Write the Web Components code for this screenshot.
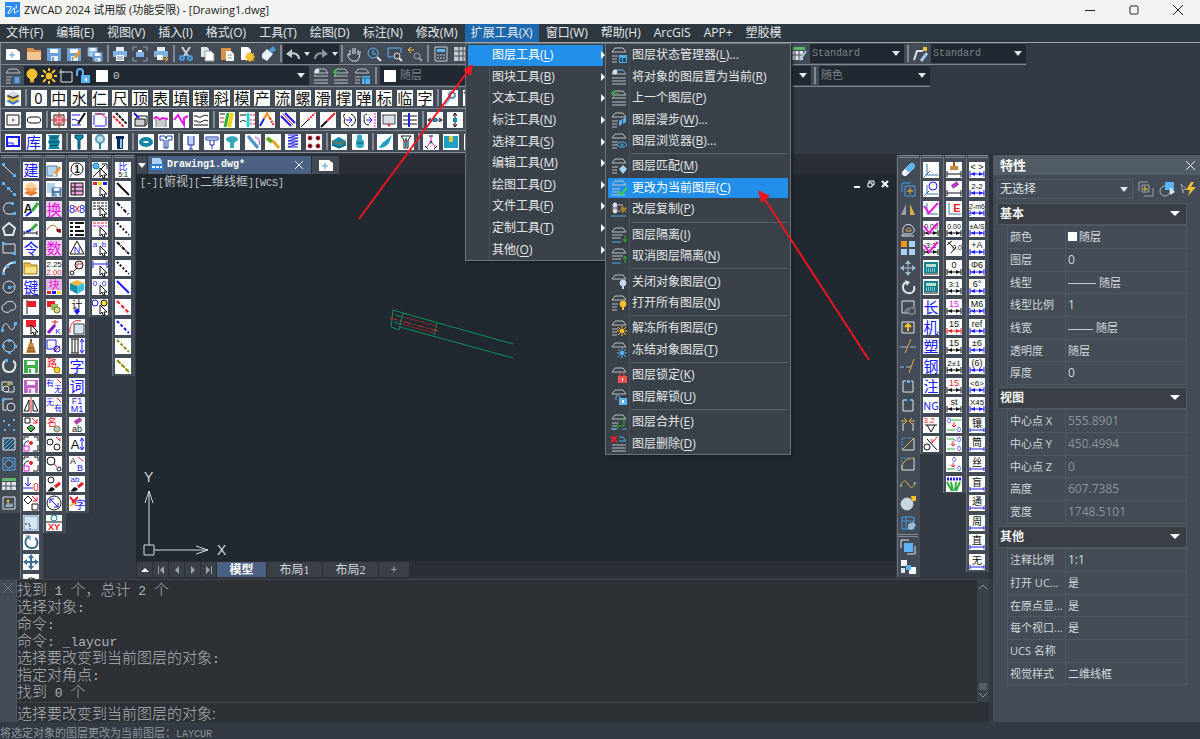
<!DOCTYPE html>
<html lang="zh-CN">
<head>
<meta charset="utf-8">
<title>ZWCAD 2024</title>
<style>
  html, body { height: 100%; margin: 0; }
  body {
    background: #333a44;
    overflow: hidden;
    font: 12px/16px "Open Sans", "Noto Sans CJK SC", sans-serif;
    color: #dfe3e6;
  }
</style>
</head>
<body>
<zw-app></zw-app>

<script>
// ---------- drawing helpers, all icons share a 16x16 box ----------
const line = (color, d, w = 1, extra = "") => `<path d="${d}" fill="none" stroke="${color}" stroke-width="${w}" ${extra}/>`;
const fill = (color, d) => `<path d="${d}" fill="${color}"/>`;
const circ = (x, y, r, stroke, inside = "none", w = 1) => `<circle cx="${x}" cy="${y}" r="${r}" stroke="${stroke}" fill="${inside}" stroke-width="${w}"/>`;
const text = (str, x, y, size, color, weight = 400) => `<text x="${x}" y="${y}" font-size="${size}" fill="${color}" font-weight="${weight}" text-anchor="middle">${str}</text>`;

const W = "#dfe4e8", B = "#5ab4f5", Y = "#f5c12e", K = "#111", U = "#1a1aff", R = "#e8202a", M = "#e815e0", T = "#0f87a5", G = "#2fae3c";

const cursor = fill("#fff", "M8 6v9l2-2 1 3h2l-1-3h3z") + line(K, "M8 6v9l2-2 1 3h2l-1-3h3z", 1);
const brush = line(R, "M14 7l-5 4", 3) + fill(K, "M1 15c2 0 2-3 5-4l3 2c-2 3-5 3-8 2z");
const redArrow = line(R, "M9 1l5 5M14 2v4h-4");
const pencil = line("#e8962e", "M14 5l-5 7", 3) + fill("#fff2cc", "M7 15l1-4 3 2z");
const dots = line(K, "M1 4V1h5M11 1h4v4M1 10c0-4 3-5 5-5M15 9v6h-5") + line(M, "M1 15v-5h5v5z") + circ(8, 7, 1.5, R, R);
const disk = (color) => fill(color, "M1 2h14v13H1z") + fill("#fff", "M4 3h8v4H4z") + fill("#e8eef4", "M5 10h7v5H5z") + fill(color, "M6 11h2v4H6z");
const check = line(M, "M1 5l5 7 9-10", 2);
const dim = (str, color = K, bar = U, size = 9) => text(str, 8, 8, size, color) + line(bar, "M1 9v6M15 9v6M1 12h14") + fill(bar, "M2 12l4-2v4zM14 12l-4-2v4z");
const dashLine = (color, gap) => line(color, "M2 2l12 12", 2, gap ? `stroke-dasharray="${gap}"` : "");
const screw = (a) => fill(T, a) + line("#064a66", a);

const layerTop = line("#b9c0c6", "M4 1h8l3 4H1z");
const layers = layerTop + line("#b9c0c6", "M1 9h6M1 12h5M1 15h5");
const layerFull = layerTop + line("#b9c0c6", "M1 8l2-1M15 8H1M1 12h14M1 15h14");
const bulb = (color) => circ(12, 9, 3, color, color) + fill(color, "M11 12h2v3h-2z");
const sun = (color) => circ(11, 11, 2, color, color) + line(color, "M11 6v2M11 14v2M6 11h2M14 11h2M7 7l2 2M15 7l-2 2M7 15l2-2M15 15l-2-2");

// icons drawn straight on the toolbar
const ICONS = {
  new: fill("#fff", "M1 3h10l4 3v8H1z") + line("#4a9de0", "M7 6v6M4 9h6"),
  open: fill("#d9924a", "M1 2h6l2 2h6v10H1z") + fill("#f6c58d", "M1 6h14v8H1z"),
  save: disk("#6b9fd6"),
  saveas: disk("#6b9fd6") + pencil,
  saveall: `<g transform="scale(.7)">${disk("#8fbdf0")}</g><g transform="translate(5 5) scale(.7)">${disk("#6b9fd6")}</g>`,
  print: fill("#e6ecf2", "M4 1h8v4H4z") + fill("#7fb2e6", "M1 5h14v6H1z") + fill("#fff", "M4 9h8v6H4z") + line("#6b7f95", "M5 11h6M5 13h6"),
  preview: line("#8aa2b8", "M1 5V1h4M11 1h4v4M1 11v4h4M11 15h4v-4") + fill("#7fb2e6", "M4 6h8v5H4z") + fill("#fff", "M6 4h4v2H6z"),
  publish: fill("#e6ecf2", "M4 1h8v4H4z") + fill("#7fb2e6", "M1 5h14v6H1z") + fill("#fff", "M4 9h6v5H4z") + line(Y, "M9 13h6M12 10l3 3-3 3"),
  cut: line("#cbd3da", "M4 1l6 9M12 1L6 10", 2) + circ(4, 12, 2, "#4a9de0", "none", 2) + circ(12, 12, 2, "#4a9de0", "none", 2),
  copy: fill("#dfe6ee", "M2 1h6l2 2v8H2z") + fill("#fff", "M6 5h6l3 3v7H6z") + line("#8a96a3", "M6 5h6l3 3v7H6z"),
  paste: fill("#d9924a", "M2 2h10v12H2z") + fill("#fff", "M7 5h5l3 3v7H7z") + line("#8a96a3", "M9 9h4M9 12h4"),
  pastespec: fill("#fff", "M2 1h7l3 3v10H2z") + circ(11, 11, 3, Y, "none", 2) + sun(Y),
  match: fill("#e6f0fa", "M2 8l5-5 6 5-6 7-5-3z") + fill("#4a9de0", "M9 4l4-4 3 4-4 3z"),
  undo: line("#c5cbd1", "M14 13c0-5-5-7-10-5", 2) + fill("#c5cbd1", "M1 8l6-5v9z"),
  redo: line("#8d959d", "M2 13c0-5 5-7 10-5", 2) + fill("#8d959d", "M15 8L9 3v9z"),
  pan: line(W, "M4 9V4M7 8V2M9 8V2M12 9V4M4 9L2 8c-1 2 2 6 4 7h5c2-2 3-5 3-10"),
  zoomrt: circ(7, 7, 5, B) + line(B, "M7 4v4h3") + line(W, "M11 11l4 4", 2),
  zoomwin: line(B, "M14 7V2H1v9h5") + circ(10, 10, 3, W) + line(W, "M12 12l3 3", 2),
  zoomprev: line(Y, "M1 4h6M4 1L1 4l3 3") + circ(10, 10, 3, "#9aa3ab") + line("#9aa3ab", "M12 12l3 3", 2),
  calc: line("#c5cbd1", "M2 1h12v14H2z") + fill("#5ab4f5", "M4 3h8v3H4z") + line("#c5cbd1", "M4 9h8M4 12h8", 1, 'stroke-dasharray="2 1"'),
  sheet: fill("#c5cbd1", "M1 1h14v14H1z") + line("#434c56", "M6 1v14M10 1v14M1 5h14M1 10h14"),
  layerprops: layers + fill("#3c6d9c", "M8 8h8v8H8z") + line("#a9d2f7", "M10 10h4M10 12h4M10 14h4"),
  bulb: circ(8, 6, 5, Y, Y) + fill(Y, "M6 10h4v4H6z") + line("#c98f12", "M6 14h4"),
  sun: circ(8, 8, 3, Y, Y) + line(Y, "M8 0v3M8 13v3M0 8h3M13 8h3M2 2l3 3M14 2l-3 3M2 14l3-3M14 14l-3-3", 2),
  freeze: line(W, "M5 4h9v10H3V7") + line(W, "M1 4h5M3 1v6"),
  unlock: line(B, "M2 8V4c0-4 6-4 6 0v3", 2) + fill(B, "M6 7h9v8H6z") + fill("#fff", "M10 10h2v3h-2z"),
  laycur: layerFull + circ(4, 3, 2, W, W),
  layprev: layerFull + line(G, "M0 4h7M3 1L0 4l3 3"),
  laystate: layers + fill(B, "M8 8h8v8H8z") + line("#1f5c8c", "M8 10h8M11 10v6"),
  tablestyle: fill("#62b36b", "M0 1h14v3H0z") + fill(W, "M0 5h12v9H0z") + line("#434c56", "M4 5v9M8 5v9M0 9h12") + line("#a8c8ea", "M15 5l-6 9", 2),
  leader: line(W, "M2 14L5 5h6", 2) + fill(Y, "M11 1h4v4h-4z") + line("#a8c8ea", "M15 7l-6 8", 3),
  line: line(W, "M2 3l12 11") + fill(B, "M1 1h3v3H1zM12 12h3v3h-3z"),
  xline: line(W, "M2 2l12 12", 1, 'stroke-dasharray="3 2"') + fill(B, "M1 1h3v3H1zM12 12h3v3h-3zM6 6h3v3H6z"),
  pline: line(W, "M12 2H7c-6 0-6 11 0 11h6") + fill(B, "M10 1h3v3h-3zM12 11h3v3h-3z"),
  polygon: line(W, "M8 2l6 5-2 7H4L2 7z", 2),
  rect: line(W, "M2 4h12v9H2z") + fill(B, "M1 2h3v3H1zM12 12h3v3h-3z"),
  arc: line(W, "M2 14C3 7 7 3 14 2", 2) + fill(B, "M1 12h3v3H1zM12 1h3v3h-3zM5 5h3v3H5z"),
  circle: circ(8, 8, 6, W) + line(B, "M8 8h6") + fill(B, "M7 7h3v3H7z"),
  cloud: line(W, "M4 13C0 12 0 6 4 5c2-4 9-3 10 0 2 3 0 7-4 6-1 2-3 3-6 2z", 1),
  spline: line(W, "M1 11C3 2 6 4 8 8s5 4 6-3") + fill(B, "M0 10h3v3H0zM13 3h3v3h-3z"),
  ellipse: circ(8, 8, 6, W) + fill(B, "M7 1h3v3H7zM1 7h3v3H1zM13 7h3v3h-3zM7 13h3v3H7z"),
  earc: line(W, "M6 2C0 4 1 14 8 14s8-9 4-11", 2) + fill(B, "M4 1h3v3H4z"),
  insert: line(W, "M1 13V4h10v3M5 14h8V8") + circ(5, 11, 3, W) + line(Y, "M6 6h4M8 4v4"),
  block: line(W, "M2 8V2h10M2 8v5h4") + circ(10, 10, 4, W) + fill(B, "M1 1h3v3H1z"),
  points: fill(B, "M2 3h2v2H2zM12 2h2v2h-2zM7 7h2v2H7zM3 12h2v2H3zM12 12h2v2h-2z"),
  hatch: fill("#23506e", "M2 2h12v12H2z") + line("#7faecb", "M2 6l4-4M2 10l8-8M2 14L14 2M6 14l8-8M10 14l4-4") + line(W, "M2 2h12v12H2z"),
  region: line(B, "M2 2h12v12H2z") + circ(8, 8, 4, B),
  tbl: fill("#62b36b", "M1 2h14v3H1z") + fill(W, "M1 6h14v8H1z") + line("#434c56", "M5 6v8M10 6v8M1 10h14"),
  image: line(W, "M2 2h12v12H2z") + fill("#8fa6ba", "M4 11l3-4 2 2 3-1v4H4z") + circ(7, 6, 1, Y, Y),
  erase: line("#fff", "M5 11l6-6", 6, 'stroke-linecap="round"') + line(B, "M9 7l3-3", 6, 'stroke-linecap="round"'),
  copyobj: line("#4a9de0", "M2 11V2h9") + line("#4a9de0", "M5 5h10v10H5z") + line(Y, "M10 7v6M7 10h6"),
  mirror: fill("#9aa3ab", "M6 3v11H1z") + fill("#e0b050", "M10 3v11h5z"),
  offset: line(W, "M3 12C1 5 8 1 12 5s2 8-2 8H4c-2 0-3 2-2 2h12") + line("#e0b050", "M6 10c0-4 5-4 5 0z"),
  array: fill("#f0981e", "M1 1h6v6H1z") + fill("#a9d2f7", "M9 1h6v6H9zM1 9h6v6H1zM9 9h6v6H9z"),
  move: line("#9db8d0", "M8 2v12M2 8h12", 1) + fill("#9db8d0", "M8 0l3 4H5zM8 16l3-4H5zM0 8l4-3v6zM16 8l-4-3v6z"),
  rotate: line(W, "M7 3c-6 2-5 10 1 11s7-4 6-7", 2) + fill(W, "M5 1l5 2-3 4z"),
  scale: line(W, "M14 8V2H2v12h6") + line("#9aa3ab", "M9 9h6v6H9zM4 12h3V9"),
  stretch: line(W, "M2 3h12v11H2z") + line(Y, "M8 12V6M5 8l3-3 3 3", 2),
  trim: line("#9db8d0", "M0 9h7M10 9h6") + line("#e0b050", "M11 1L5 15"),
  extend: line("#9db8d0", "M0 9h4M6 9h5") + line("#e0b050", "M14 1l-5 14"),
  break1: line(W, "M6 3H3v11h10V3h-2") + fill(B, "M7 2h3v3H7z"),
  break2: line(W, "M5 3H3v11h10V3h-2") + fill(B, "M5 2h2v2H5zM10 2h2v2h-2z"),
  join: line(W, "M3 14V6M13 14V6") + line("#e0b050", "M1 4h5M10 4h5M4 1l3 3-3 3M12 1L9 4l3 3"),
  chamfer: line(W, "M14 2v12H2") + line("#e0b050", "M2 14L14 2") + line("#4a9de0", "M2 13V2h11", 1, 'stroke-dasharray="2 1"'),
  fillet: line(W, "M14 2v12H2V9") + line("#e0b050", "M2 12C2 6 7 2 14 2") + line("#4a9de0", "M2 9V2h7", 1, 'stroke-dasharray="2 1"'),
  blend: line("#e0b050", "M1 9C3 4 6 4 8 8s5 5 7-1") + line(W, "M0 10h2M14 7h2"),
  sphere: circ(7, 9, 6, "#c8d5e2", "#c8d5e2") + fill(Y, "M11 1h5v5h-4z"),
  explode: line("#4a9de0", "M2 2h12v12H2zM6 2v12M2 6h12") + fill("#9db8d0", "M8 9l5-2 3 3-4 5-4-1z"),
  front: line(W, "M1 9V1h8M7 15h8V7") + fill(B, "M4 4h9v9H4z"),
  group: fill("#fff", "M1 1h6v6H1zM9 8h7v7H9z") + fill(B, "M6 6h5v5H6z") + fill("#dfe6ee", "M1 9h4v5H1z"),
  addsel: line("#9aa3ab", "M1 10V1h9M4 4h7v7H4zM6 15h9V7") + line(Y, "M7 5v5M5 8h5"),
  quicksel: circ(6, 10, 5, "#9db8d0") + fill(B, "M6 1h9v8H6z") + fill(W, "M11 6v8l5-3z"),
  flash: line("#9aa3ab", "M1 3l5 5-3 1v3z") + fill(Y, "M11 1L6 9h4l-2 6 8-9h-5l3-5z"),
  doc: fill("#a9d2f7", "M3 1h8l2 3v3H3z") + fill("#2f7fd6", "M1 7h14v6H1z") + line("#fff", "M3 10h10", 2, 'stroke-dasharray="3 1"'),
  m1: layers + fill("#4aaee8", "M8 8h8v8H8z") + fill("#1f4766", "M9 11h2v4H9zM12 11h3v4h-3z"),
  m2: layerTop + line("#3a84b8", "M4 1h8l3 4") + line("#b9c0c6", "M1 9h14M1 12h14M1 15h14") + circ(4, 3, 2, W, W),
  m3: layerFull + line(G, "M0 3h8M3 0L0 3l3 3v3"),
  m4: layers + fill(B, "M8 9l3-2v5l-3 2zM12 7l3-2v5l-3 2z"),
  m5: layers + line("#4aaee8", "M6 12c2-4 8-4 10 0-2 3-8 3-10 0z") + circ(11, 12, 1, "#4aaee8"),
  m6: layers + fill("#a9d2f7", "M8 11l4-4 4 4-4 5z"),
  m7: layerTop + line("#b9c0c6", "M1 9h8M1 12h6") + line("#a9d2f7", "M0 15h14") + line("#3fd04a", "M7 11l3 4 6-8", 2),
  m8: circ(4, 4, 2, W, W) + circ(4, 10, 2, W, W) + line("#b9c0c6", "M7 4h5M7 10h2M1 7h6") + line("#4aaee8", "M0 15h15") + line("#c99a2a", "M10 6l5 5M15 6l-5 5M12 5v7M9 8h7"),
  m9: layerTop + line("#b9c0c6", "M1 8h11M1 11h9") + line("#4aaee8", "M1 15h9") + line(G, "M14 8v7M12 12l2 3 2-3"),
  m10: layerTop + line("#b9c0c6", "M1 8h11M1 11h9") + line("#4aaee8", "M1 15h9") + line(G, "M14 15V8M12 11l2-3 2 3"),
  m11: layerTop + bulb("#c8d9ec"),
  m12: layers + bulb(Y),
  m13: layers + sun(Y),
  m14: layerTop + sun(B),
  m15: layerTop + line("#ef5350", "M9 9V7c0-2 4-2 4 0v2") + fill("#ef5350", "M7 9h9v7H7z") + fill("#fff", "M11 11h1v3h-1z"),
  m16: layerTop + line(B, "M5 11V8c0-2 4-2 4 1") + fill(B, "M8 9h8v7H8z") + fill("#fff", "M11 11h2v3h-2z"),
  m17: layers + line("#4aaee8", "M0 15h5M11 15h5") + line(G, "M13 5v7H6M8 9l-3 3 3 3M10 5h3"),
  m18: line("#4aaee8", "M8 1h4l3 4H8") + line("#b9c0c6", "M1 9h14M1 12h14M1 15h14") + line(R, "M0 0l6 6M6 0L0 6", 2),
};

// icons on a white tile
const TILES = {
  stack: fill("#4a7fd0", "M1 11l7-3 7 3-7 4z") + fill("#f0c832", "M1 8l7-3 7 3-7 4z") + fill("#4a4a4a", "M1 6l7-3 7 3-7 3z") + fill("#d5dde6", "M1 4l7-3 7 3-7 3z"),
  wrench: line("#8fb4dc", "M3 14l6-8", 3) + circ(10, 5, 3, "#6b8fc0", "none", 2),
  bolt: line("#8a6f2a", "M1 2l3 3M3 1l3 4", 2),
  dotbox: line(K, "M2 3h12v10H2z") + fill(M, "M7 7h2v2H7z"),
  slot: line(K, "M5 5h6c5 0 5 6 0 6H5C0 11 0 5 5 5z"),
  target: line(K, "M3 3h10v10H3z") + line(R, "M8 0v16M0 8h16M5 5h6v6H5z"),
  sketch: line(U, "M1 3h8M1 8c3-3 5 3 8 0M1 13h9") + line(K, "M14 1L7 12", 2),
  redbox: line(U, "M3 2h10M3 14h10M2 3v10M14 5v9") + line(R, "M3 2h7l4 4"),
  dash2: line(K, "M4 1l11 11", 2, 'stroke-dasharray="3 1"') + line(R, "M1 4l11 11", 2, 'stroke-dasharray="3 1"'),
  printer: fill("#ccc", "M3 7h11v7H3z") + line(K, "M3 7l3-3h9v8l-2 2H3zM3 7h10v7") + line(U, "M2 1l5 5", 2),
  wave: fill("#c8ccd0", "M3 8h10v7H3z") + line("#777", "M3 15V6M13 15V6") + line(M, "M1 7c4-6 4 4 8-1l6 1", 2),
  zig: line(M, "M1 8l4-5 6 10V6l4-2", 2),
  breakl: line(K, "M1 4h3c4 4 6-3 11 0M1 9h3c4 4 6-3 11 0M1 13h14"),
  bars: line(G, "M6 15L9 1", 3) + line("#f0d51e", "M10 15l3-14", 4) + line(R, "M1 6h4M1 10h4") + line(K, "M1 2h5"),
  bars2: line("#25d0d6", "M9 15V1", 3) + line(K, "M1 3h6M1 10c3-2 4-2 6 0") + line(R, "M11 3h5M11 8h5M11 12h5", 1, 'stroke-dasharray="2 1"'),
  fan: line(U, "M1 14L6 5", 2) + line("#f09a1e", "M5 7l3-6 3 6", 2) + line(R, "M11 6l4 8", 2, 'stroke-dasharray="2 1"'),
  slant: line(U, "M1 4l10 10M5 1l10 10", 2) + line(R, "M3 2l10 11"),
  diag1: line(K, "M1 15L8 8") + line(R, "M8 8l7-7", 2, 'stroke-dasharray="2 1"'),
  diag2: line(K, "M1 15l6-6", 2) + line(R, "M7 9l8-8", 2),
  loopR: line(K, "M4 2c-4 3 2 4-1 7 0 3 3 4 5 5") + line(U, "M5 8h6M8 5l3 3-3 3") + line(K, "M10 2c6 3 6 9 0 12"),
  loopP: line(K, "M6 2c-5 1-2 4-3 6 0 3 2 5 5 5") + line(U, "M5 8h6M8 5l3 3-3 3") + line(M, "M14 1v14", 1, 'stroke-dasharray="2 1"'),
  frame: fill("#d8e0ea", "M2 3h12v9H2z") + line("#444", "M1 3h14M2 3v9h12V3") + circ(8, 13, 1, R, R),
  rows: line(K, "M1 4h14M1 8h14M1 12h14") + line(U, "M7 1v14", 2),
  harrow: line(K, "M1 8h14M4 6L1 8l3 2M12 6l3 2-3 2") + fill(T, "M6 6h4v4H6z"),
  varrow: line(K, "M8 1v14M6 4l2-3 2 3M6 12l2 3 2-3") + fill(T, "M6 6h4v4H6z"),
  profile: line(U, "M2 3h12v9H2z", 2) + line(U, "M2 9h6v3"),
  spring1: fill(T, "M2 1h12l-2 3 2 4-2 4 2 3H2l2-3-2-4 2-4z") + line("#064a66", "M3 4l10-1M3 8h10M3 12l10-1"),
  screw1: screw("M4 1h8v3l-3 2v9H7V6L4 4z"),
  ring: circ(8, 5, 4, "#5a9fb5", "#bfe0ea", 2) + line(T, "M8 9v6", 2),
  pin: fill("#082a5c", "M4 2h8v3H4zM5 5h6v10H5z") + fill("#7fd0f0", "M8 5h2v9H8z"),
  torus: `<ellipse cx="8" cy="8" rx="5" ry="3" fill="none" stroke="#0f87a5" stroke-width="4"/>`,
  tshape: line("#1c3fa8", "M2 2h5l1 3 1-3h5v4h-4v8H6V6H2z", 1) + line("#1c3fa8", "M8 6v8"),
  cyl: fill("#bcd0f8", "M5 2h6v9H5z") + line("#1c2fa8", "M5 2v9h6V2M8 11v4M6 15h4"),
  cyl2: line("#1c2fa8", "M2 3h12v3H2zM6 6v5h4V6M8 11v4", 1) + fill("#9cb8f0", "M3 4h10v2H3z"),
  mush: fill("#35a8b8", "M2 6c0-5 12-5 12 0l-4 3v5H6V9z"),
  bolt2: line("#4a90c8", "M3 2l10 12", 3) + line(M, "M10 3c5 2 5 4 4 8"),
  hammer: line("#6aa81e", "M2 4l5 4", 4) + line("#e0a81e", "M8 7l6 7", 3),
  coil: line("#1c1cd8", "M3 1h10L3 4h10L3 7h10L3 10h10L3 13h10"),
  four: circ(4, 4, 2, R, K) + circ(12, 4, 2, R, K) + circ(4, 12, 2, R, K) + circ(12, 12, 2, R, K),
  book: fill(T, "M1 7l7-4 7 4v4l-7 3-7-3z") + line("#d0601e", "M1 7l7 3 7-3") + line("#064a66", "M1 11l7 3 7-3"),
  pipe: fill("#35a8c0", "M5 2c0-2 5-2 5 0v3l2 2v5l-2 2H6l-2-2V7l1-2z") + line("#064a66", "M5 9h6"),
  wedge: fill("#1c9fc0", "M1 13c3 0 3-4 7-6l7-6-3 8c-3 4-8 6-11 4z"),
  nozzle: line(K, "M3 2h10l-3 4v8H6V6z") + fill("#1c8fb0", "M7 4h2v9H7z") + line(R, "M5 7h6"),
  tri: circ(8, 8, 1, K) + line(M, "M8 7V2M7 9l-4 5M9 9l4 5") + line(K, "M6 2h4M2 12l3 3M14 12l-3 3"),
  bracket: fill("#1ca0c8", "M1 2h14v12H1z") + fill("#f0c832", "M6 2h4v6H6z"),
  layersO: fill("#e87830", "M1 12l7-4 7 4-7 3z") + fill("#f5a050", "M1 8l7-4 7 4-7 4z") + fill("#fbd0a0", "M1 5l7-4 7 4-7 3z"),
  abrush: text("A", 5, 12, 12, K, 700) + line(G, "M15 2l-6 8", 3) + line(U, "M8 11l-5 4", 2),
  bline: line(K, "M1 12h13M1 10v4M14 10v4") + line(G, "M14 3L8 9", 3) + line(U, "M8 9l-5 2", 2),
  folder: fill("#e8c040", "M1 3h6l1 2h6v9H1z") + fill("#fbe48a", "M3 7h12l-2 7H1z") + line("#a07818", "M1 3h6l1 2h6v9H1z"),
  flag: line(K, "M4 1v14") + fill(R, "M4 2h9v6H4z"),
  flagc: fill(R, "M3 1h10v7H3z") + cursor,
  broom: line("#8a5a2a", "M8 1v5", 2) + fill("#c98a3a", "M6 5h4l3 10H3z") + line("#7a4a1a", "M5 10h6M4 13h8"),
  diskG: disk("#3fae4a"),
  diskP: disk("#c060c8"),
  mirr: line(K, "M6 3v11H1zM10 3v11h5z") + line(R, "M8 0v16"),
  cpy: line(K, "M2 1h5v5H2z") + redArrow + fill(G, "M4 11l4-2 4 3-4 3z") + line(K, "M4 11l4-3 4 3-4 4z"),
  dots1: dots,
  down0: line(U, "M5 1v8M2 7l3 3 3-3M0 12h10") + text("0", 13, 15, 10, R),
  sqrot: line(K, "M5 1l4 4-4 4-4-4zM9 9h6v6H9z") + redArrow,
  scaleT: fill("#d5e4f2", "M1 1h14v14H1z") + line("#6b8fb8", "M1 1h14v14H1z") + line("#333", "M2 9h5v5", 1, 'stroke-dasharray="2 1"'),
  rotT: line("#3a6f9a", "M6 3c-5 2-5 10 2 11s8-7 4-10", 2) + line("#3a6f9a", "M3 2h4v4"),
  moveT: line("#3a6f9a", "M8 2v12M2 8h12", 2) + fill("#3a6f9a", "M8 0l3 4H5zM8 16l3-4H5zM0 8l4-3v6zM16 8l-4-3v6z"),
  arcs: line(K, "M2 13C2 4 8 2 13 6M6 8c2-3 6 0 5 6"),
  pgpen: fill("#b8d4ea", "M1 4h10v10H1z") + line("#4a78a8", "M1 4h10v10H1z") + pencil,
  pgsave: fill("#b8d4ea", "M1 2h8v10H1z") + `<g transform="translate(5 5) scale(.7)">${disk("#4a78a8")}</g>`,
  curve: line("#a86a3a", "M1 9c3-6 8-6 11-1") + fill("#8a1a1a", "M10 8h5v4l-4-1z"),
  num2: text("2.25", 8, 7, 8, K) + text("2.00", 8, 15, 8, R),
  kuai: fill("#e2b8e2", "M0 0h16v11H0z") + text("块", 8, 10, 11, M) + fill(R, "M1 12h4v3H1z") + fill(U, "M6 12h4v3H6z") + fill("#f0d51e", "M11 12h4v3h-4z"),
  shapes: fill(R, "M1 2h8v6H1z") + fill("#9db85a", "M5 5h7v6H5z") + circ(11, 11, 3, "#5a7a2a", "#e0d890"),
  wand: line("#8a1ac0", "M2 14l7-8", 3) + line(R, "M9 1v5M6 3h6") + text("K", 12, 15, 8, U),
  selx: line(U, "M1 2h9v9H1z") + circ(11, 11, 3, U) + line(R, "M8 14l6-6"),
  lu: text("路", 6, 9, 10, R) + circ(11, 12, 3, "#a87a2a", "#f0d51e"),
  has: text("有", 4, 8, 8, U) + text("无", 12, 14, 8, U) + line(R, "M11 1l4 4"),
  nohas: text("无", 4, 8, 8, U) + text("有", 12, 14, 8, U) + line(R, "M11 1l4 4"),
  ming: text("名", 6, 9, 10, R) + circ(11, 12, 3, "#a87a2a", "#9dc8e8"),
  curls: circ(4, 6, 3, K) + circ(11, 11, 3, K) + line(R, "M10 1l4 4v-3"),
  link: circ(5, 5, 4, K) + circ(13, 13, 2, K) + line(M, "M8 8l4 4"),
  cbrush: circ(5, 4, 3, K) + brush,
  carrow: circ(8, 8, 7, K) + line(U, "M4 4l8 8M4 8V4h4M12 8v4H8"),
  xy: circ(8, 3, 3, T) + line(K, "M0 7h16") + text("XY", 8, 15, 9, R, 700),
  one: circ(8, 7, 6, K) + text("1", 8, 11, 10, K, 700) + line(T, "M1 15l2-3"),
  pgrid: fill("#e8a8e0", "M2 2h12v12H2z") + line(K, "M2 2h12v12H2zM6 2v12M2 6h12M2 10h12"),
  eight: text("8", 3, 12, 11, U) + text("8", 13, 12, 11, U) + line(R, "M6 5l4 6M10 5l-4 6"),
  list: line(K, "M1 2h3M1 6h3M1 10h3M1 14h3M6 2h9M6 6h5M6 10h9M6 14h9", 2),
  triN: line(K, "M8 1l7 13H1z") + text("N", 8, 13, 9, U),
  credl: circ(10, 5, 4, K) + circ(3, 13, 2, K) + line(K, "M5 11l3-3") + line(R, "M8 8V4h5"),
  cube: fill("#f0b83a", "M1 4l7-3 7 3-7 3z") + fill("#1c8fb0", "M1 4l7 3v8l-7-4z") + fill("#35c0e0", "M15 4L8 7v8l7-4z"),
  ji: text("计", 8, 10, 11, K) + fill(U, "M8 9l3 3-3 4-3-4z"),
  redarc: line(R, "M1 14C0 4 6 0 12 2", 1) + line("#333", "M5 5h10v10H5z") + fill("#d5e4f2", "M6 6h8v8H6z"),
  barcode: line(K, "M3 1v14M6 1v14M9 1v14M2 1h8M2 15h8") + line(U, "M13 2v12M11 4l2-3 2 3M11 12l2 3 2-3"),
  f1: text("F1", 8, 7, 9, U) + text("M1", 8, 15, 9, U),
  erab: line("#b040b0", "M6 6l6-4", 4) + text("ab", 8, 15, 9, K),
  aud: text("A", 6, 13, 13, K) + line(U, "M13 3v10M11 5l2-3 2 3M11 11l2 3 2-3"),
  ab2: text("A", 4, 8, 9, K) + text("B", 11, 15, 9, U) + line(R, "M9 1l5 4"),
  abb: text("ab", 6, 6, 8, U) + brush,
  zic: text("字", 11, 14, 11, U) + line(R, "M1 2l6 7M3 8l6-6", 2) + line("#f0b83a", "M1 11l5-3", 2),
  c1: circ(4, 4, 3, T, B) + line(K, "M10 2h5v5M1 15L13 3") + cursor,
  c2: fill(R, "M1 1h4v3H1z") + fill("#f0d51e", "M6 1h4v3H6z") + fill(U, "M11 1h4v3h-4z") + cursor,
  c3: line(K, "M1 2h14M1 5h14M1 8h14", 1, 'stroke-dasharray="3 1"') + cursor,
  c4: line(R, "M1 2h14", 1, 'stroke-dasharray="3 1"') + line(M, "M1 5h14", 1, 'stroke-dasharray="3 1"') + cursor,
  c5: text("a", 3, 7, 8, U) + text("b", 12, 7, 8, U) + cursor,
  c6: line(U, "M1 1v7M15 1v7M1 4h14") + cursor,
  c7: text("0", 3, 7, 8, U) + text("0", 12, 7, 8, U) + cursor,
  c8: circ(3, 4, 3, U) + circ(12, 4, 3, K, "#f5e832") + cursor,
  bi: text("比", 8, 8, 9, U) + text("5:1", 8, 15, 7, K),
  l1: dashLine(K), l2: dashLine(K, "4 2 1 2"), l3: dashLine(K, "2 2"), l4: dashLine(K, "4 1 1 1"),
  l5: dashLine(U), l6: dashLine(R, "4 2"), l7: dashLine(U, "3 2"), l8: dashLine("#8a8a1a", "3 2"), l9: dashLine("#8a8a1a", "5 1"),
  ucs: line("#3a78a8", "M4 2v11h11M1 15l6-6"),
  ucsc: line("#3a78a8", "M4 4v9h11M1 15l5-5") + circ(10, 5, 4, U),
  ucsk: line("#3a78a8", "M4 2v11h11") + check,
  dck: dim("0.00", K, K, 7) + check,
  rck: dim("3:1", K, K, 8) + check,
  kalk: fill("#0e7f8f", "M1 2h14v11H1z") + fill("#b8e0d0", "M3 4h10v3H3z") + line("#fff", "M3 9h10M3 11h10", 1, 'stroke-dasharray="1 1"') + line(K, "M1 14h14"),
  rough: text("3.2", 6, 6, 8, R) + line(K, "M2 8h12M4 8l4 7 4-7"),
  pct: circ(4, 11, 3, K) + line(K, "M4 3l10 11") + line(R, "M14 1l-5 6v-4"),
  dbroom: fill("#8a5a2a", "M7 0h2v4H7z") + fill("#c98a3a", "M4 4h8v4H4z") + line(K, "M1 9v6M15 9v6M1 12h14"),
  deras: line("#b040b0", "M6 6l6-4", 4) + line(K, "M1 9v6M15 9v6M1 12h14"),
  ue: line("#3a78a8", "M3 2v11h12") + text("E", 11, 11, 11, R, 700),
  rot0: line(K, "M2 2l6 6M5 13l5-6M1 5l5-4") + text("0.0", 11, 10, 7, K),
  lv1: text("0", 3, 6, 7, U) + text("0", 13, 15, 7, U) + line(G, "M5 3h10M1 13h8") + line(R, "M8 5v5M6 8l2 2 2-2"),
  lv2: text("0", 13, 6, 7, U) + text("0", 13, 15, 7, U) + line(G, "M1 3h6l3 2M1 13h8") + line(R, "M7 5v5M5 8l2 2 2-2"),
  lv3: text("0", 8, 6, 7, U) + text("0", 13, 15, 7, U) + line(G, "M1 13h8") + line(R, "M7 7v4M5 9l2 2 2-2"),
  grass: line(U, "M1 3h14", 3, 'stroke-dasharray="2 1"') + line(G, "M6 15L1 6M7 15L5 6M9 15l1-9M10 15l4-9", 2),
};

// dimension tiles: token -> [text, text colour, arrow colour, size]
const DIMS = {
  d000: ["0.00", K, K, 7], d0: ["0", K, K], d31: ["3:1", K, K, 8],
  e1: ["15", M, K], e2: ["15", K, R], e3: ["15", K, K], e4: ["2±1", K, K, 8], e5: ["15", R, K], e6: ["st", K, K],
  f1a: ["&lt; &gt;"], f2: ["2-2", K, U, 8], f3: ["2-m6", K, U, 7], f4: ["±A/S", K, U, 7], f5: ["+A"], f6: ["Φ6"], f7: ["6°"],
  f8: ["M6"], f9: ["ref", K, U, 9], f10: ["±6"], f11: ["(6)"], f12: ["&lt;6&gt;", K, U, 8], f13: ["X45", K, U, 8],
};
for (const [key, args] of Object.entries(DIMS)) TILES[key] = dim(...args);
for (const ch of "镶筒丝盲通周直无一") TILES["z" + ch] = text(ch, 8, 10, 10, K) + line(U, "M1 11v4M15 11v4M1 13h14");

const svg = (body) => `<svg viewBox="0 0 16 16" aria-hidden="true">${body}</svg>`;

// ---------- one toolbar button ----------
// icon="save" draws an icon, icon="k:中" draws a character (k black, b blue, m magenta)
class ZwTool extends HTMLElement {
  connectedCallback() {
    if (!this.shadowRoot) this.attachShadow({ mode: "open" });
    const name = this.getAttribute("icon");
    const glyph = name[1] === ":" ? name.slice(2) : "";
    const tile = glyph || name in TILES;
    this.shadowRoot.innerHTML = `
      <style>
        :host { display: flex; align-items: center; justify-content: center; }
        button {
          width: 16px; height: 16px; padding: 0; border: 0; background: none;
          display: flex; align-items: center; justify-content: center; flex: none;
          font: 15px/16px "Noto Sans CJK SC", sans-serif; color: #111;
        }
        .tile { background: #fff; }
        .b { color: #1a1aff; }
        .m { color: #e815e0; background: #e9cdea; }
        .wide { font-size: 11px; }
        svg { width: 16px; height: 16px; overflow: visible; font-family: "Liberation Sans", "Noto Sans CJK SC", sans-serif; }
      </style>
      <button type="button" aria-label="${glyph || name}" class="${tile ? "tile" : ""} ${glyph ? name[0] : ""} ${glyph.length > 1 ? "wide" : ""}">${glyph || svg(ICONS[name] || TILES[name] || "")}</button>
    `;
  }
}
customElements.define("zw-tool", ZwTool);

// ---------- a row or a column of tools; "|" is a separator ----------
class ZwToolbar extends HTMLElement {
  connectedCallback() {
    this.attachShadow({ mode: "open" });
    const items = this.getAttribute("tools").trim().split(/\s+/).map((name) => {
      if (name === "|") return '<i class="sep"></i>';
      if (name === "undo-box") {
        return '<span class="undo"><zw-tool icon="undo"></zw-tool><b></b><zw-tool icon="redo"></zw-tool><b></b></span>';
      }
      return `<zw-tool icon="${name}"></zw-tool>`;
    });
    this.shadowRoot.innerHTML = `
      <style>
        :host { display: flex; background: #434c56; box-sizing: border-box; flex: none; }
        :host(:not([vertical])) { align-items: center; height: 21px; border-left: 1px solid #7f8a96; padding-left: 2px; }
        :host([vertical]) { flex-direction: column; width: 23px; border-left: 1px solid #6b7580; padding: 5px 2px 0 0; position: relative; }
        :host([first]) { border-left: 0; width: 20px; }
        :host(:not([vertical])) zw-tool { flex: 1; }
        :host([vertical]) zw-tool { height: calc((100cqh - 12px) / 21); }
        .sep { width: 2px; height: 17px; margin: 0 1px 0 2px; background: #7f8a96; }
        .grip { position: absolute; top: 0; left: 0; right: 0; }
        .grip, :host([vertical]) .sep { width: auto; height: 1px; margin: 0 1px; background: none; border: solid #7f8a96; border-width: 1px 0; }
        :host([vertical]) .sep { margin: 1px 0; }
        .undo { display: flex; align-items: center; width: 56px; height: 20px; background: #222932; flex: none; }
        .undo b { border: 3px solid transparent; border-top: 4px solid #dfe4e8; border-bottom: 0; margin: 0 1px; }
      </style>
      ${this.hasAttribute("vertical") ? '<i class="grip"></i>' : ""}${items.join("")}
    `;
  }
}
customElements.define("zw-toolbar", ZwToolbar);

// ---------- drop-down with its own arrow ----------
class ZwSelect extends HTMLElement {
  connectedCallback() {
    this.attachShadow({ mode: "open" });
    this.shadowRoot.innerHTML = `
      <style>
        :host { display: flex; align-items: center; position: relative; height: 19px; background: #222832; color: #7b838c; min-width: 0; box-sizing: border-box; }
        :host([plain]) { background: none; border: 1px solid #525d67; color: #dfe3e6; }
        select {
          appearance: none; flex: 1; min-width: 0; border: 0; background: none; color: inherit; height: 100%;
          padding: 0 14px 0 2px; font: 11px/16px "Liberation Mono", "Noto Sans CJK SC", monospace;
        }
        :host([small]) select { font-size: 10px; }
        :host([plain]) select { font-family: "Open Sans", "Noto Sans CJK SC", sans-serif; font-size: 12px; }
        i { position: absolute; right: 4px; border: 4px solid transparent; border-top: 5px solid #dfe4e8; border-bottom: 0; pointer-events: none; }
      </style>
      <slot></slot>
      <select aria-label="${this.getAttribute("label")}"><option>${this.getAttribute("value")}</option></select><i></i>
    `;
  }
}
customElements.define("zw-select", ZwSelect);

// ---------- title bar ----------
class ZwTitlebar extends HTMLElement {
  connectedCallback() {
    this.attachShadow({ mode: "open" });
    this.shadowRoot.innerHTML = `
      <style>
        :host { display: flex; align-items: center; height: 24px; background: #f3f3f2; color: #1b1b1b; padding-left: 5px; box-sizing: border-box; }
        h1 { margin: 0 auto 0 4px; font-size: 11px; font-weight: 400; line-height: 20px; padding-bottom: 4px; }
        .logo { width: 15px; height: 15px; margin-bottom: 5px; }
        button { width: 44px; height: 20px; border: 0; padding: 0; margin-bottom: 4px; background: none; }
        button svg { width: 10px; height: 10px; display: block; margin: auto; }
      </style>
      <svg class="logo" viewBox="0 0 16 16"><path fill="#2a8af0" d="M0 0h16v16H0z"/><path d="M1 5h6L3 12h2l5-6v6l5-3M12 3v4" fill="none" stroke="#fff"/></svg>
      <h1><slot></slot></h1>
      <button type="button" aria-label="最小化"><svg viewBox="0 0 10 10"><path d="M0 5.5h10" stroke="#222"/></svg></button>
      <button type="button" aria-label="最大化"><svg viewBox="0 0 10 10"><rect x="1" y="1" width="8" height="8" rx="1" fill="none" stroke="#222"/></svg></button>
      <button type="button" aria-label="关闭"><svg viewBox="0 0 10 10"><path d="M0 0l10 10M10 0L0 10" stroke="#222"/></svg></button>
    `;
  }
}
customElements.define("zw-titlebar", ZwTitlebar);

// ---------- menu bar ----------
class ZwMenubar extends HTMLElement {
  connectedCallback() {
    this.attachShadow({ mode: "open" });
    const items = this.getAttribute("items").split(" ");
    const open = this.getAttribute("open");
    this.shadowRoot.innerHTML = `
      <style>
        :host { display: flex; gap: 1px; height: 19px; background: #2e3841; border-bottom: 1px solid #9aa5a8; box-sizing: border-box; }
        button { border: 0; background: none; color: #e4e8ea; padding: 0 6px; font: inherit; line-height: 16px; white-space: nowrap; }
        button.open { background: #1c69ae; }
      </style>
      ${items.map((item) => `<button type="button" class="${item === open ? "open" : ""}">${item}</button>`).join("")}
    `;
  }
}
customElements.define("zw-menubar", ZwMenubar);

// ---------- popup menu; entries are "icon:label:key:tail", "-" draws a rule ----------
class ZwMenu extends HTMLElement {
  connectedCallback() {
    this.attachShadow({ mode: "open" });
    const active = this.getAttribute("active");
    const rows = this.textContent.trim().split(/\s*\n\s*/).map((row) => {
      if (row === "-") return '<li class="rule" role="separator"></li>';
      const [icon, label, key, tail = ""] = row.split(":");
      return `<li class="item"><button type="button" class="${label === active ? "active" : ""}"><span class="icon">${icon ? svg(ICONS[icon]) : ""}</span><span>${label}(<u>${key}</u>)${tail}</span></button></li>`;
    });
    this.shadowRoot.innerHTML = `
      <style>
        :host { display: block; background: #3a4149; border: 1px solid #6b747b; box-sizing: border-box; box-shadow: 2px 2px 2px #1a1f25; }
        ul { list-style: none; margin: 0; padding: 0 2px; height: 100%; display: flex; flex-direction: column; box-sizing: border-box; background: linear-gradient(90deg, transparent 23px, #4a535b 23px, #4a535b 24px, transparent 24px); }
        .item { flex: 1; display: flex; padding: 1px 0 0; }
        .rule { height: 1px; margin: 2px 0 1px 23px; background: #58616a; }
        button { position: relative; flex: 1; display: flex; align-items: center; gap: 3px; border: 0; padding: 0; background: none; color: #e4e8ea; font: inherit; line-height: 18px; }
        .active { background: #2290ea; color: #fff; }
        .icon { width: 21px; display: flex; justify-content: center; }
        svg { width: 16px; height: 16px; margin-left: 1px; }
        u { text-underline-offset: 2px; }
        :host([cascade]) button::after { content: ""; position: absolute; right: -2px; border: 4px solid transparent; border-left: 4px solid #fff; border-right: 0; }
      </style>
      <ul>${rows.join("")}</ul>
    `;
  }
}
customElements.define("zw-menu", ZwMenu);

// ---------- drawing window ----------
class ZwDrawing extends HTMLElement {
  connectedCallback() {
    this.attachShadow({ mode: "open" });
    this.shadowRoot.innerHTML = `
      <style>
        :host { display: flex; flex-direction: column; min-width: 0; background: #2b2f35; }
        button { border: 0; padding: 0; background: none; color: inherit; font: inherit; }
        .tabs { display: flex; height: 19px; gap: 1px; padding: 1px 1px 0; box-sizing: border-box; }
        .tabs > button { background: #434a54; }
        .down { width: 10px; }
        .down::before { content: ""; display: block; margin: auto; width: 0; border: 4px solid transparent; border-top: 5px solid #fff; border-bottom: 0; }
        .tab { display: flex; align-items: center; width: 163px; background: #4b6183; color: #fff; box-sizing: border-box; padding: 0 8px 0 1px; font: bold 10px/16px "Liberation Mono", monospace; }
        .tab span { margin: 0 auto 0 2px; }
        .tab button svg { width: 8px; height: 8px; display: block; }
        .add { width: 27px; display: flex; align-items: center; justify-content: center; background: #434a54; }
        .canvas { flex: 1; position: relative; background: #212830; overflow: hidden; }
        .view { display: flex; align-items: center; padding: 0 7px 0 4px; height: 20px; color: #c3c9ce; font: 10px/16px "Liberation Mono", "Noto Sans CJK SC", monospace; }
        .view p { margin: 0 auto 2px 0; }
        .view p span { font-size: 12px; }
        .view svg { width: 8px; height: 8px; margin-left: 6px; }
        .view button { display: flex; }
        .part { position: absolute; left: 250px; top: 130px; }
        .ucs { position: absolute; left: 4px; bottom: 2px; font: 14px "Liberation Sans", sans-serif; }
        .layouts { display: flex; gap: 1px; height: 15px; padding: 1px; font: 12px/14px "Liberation Serif", "Noto Sans CJK SC", serif; color: #cfd5da; }
        .layouts button { background: #3b4048; }
        .layouts .nav { width: 15px; display: flex; align-items: center; justify-content: center; }
        .nav svg { width: 8px; height: 8px; }
        .layouts .on { background: #4b6183; color: #fff; font-weight: 700; width: 49px; }
        .sheet { width: 55px; }
        .plus { width: 30px; }
      </style>
      <div class="tabs">
        <button class="down" type="button" aria-label="列表"></button>
        <div class="tab"><zw-tool icon="doc"></zw-tool><span>Drawing1.dwg*</span><button type="button" aria-label="关闭"><svg viewBox="0 0 8 8"><path d="M0 0l8 8M8 0L0 8" stroke="#fff"/></svg></button></div>
        <div class="add"><zw-tool icon="new"></zw-tool></div>
      </div>
      <div class="canvas">
        <div class="view">
          <p>[-][<span>俯视</span>][<span>二维线框</span>][WCS]</p>
          <button type="button" aria-label="最小化"><svg viewBox="0 0 8 8"><path d="M1 6h6v2H1z" fill="#fff"/></svg></button>
          <button type="button" aria-label="还原"><svg viewBox="0 0 8 8"><path d="M2 3V1h5v4H5M1 3h4v4H1z" fill="none" stroke="#fff"/></svg></button>
          <button type="button" aria-label="关闭"><svg viewBox="0 0 8 8"><path d="M1 1l6 6M7 1L1 7" stroke="#fff" stroke-width="2"/></svg></button>
        </div>
        <svg class="part" width="140" height="66" viewBox="0 0 140 66" fill="none" stroke="#10905a">
          <path d="M7 6l10 3-4 17-8-3M5 23L7 6M9 11l7 2M8 18l6 2M17 9l110 31M14 23l113 31M51 19l-3 12"/>
          <path d="M17 13l34 9M15 20l33 9" stroke="#7d2a2f"/>
          <path d="M4 14l48 13" stroke="#d02a2a" stroke-dasharray="8 2 2 2"/>
        </svg>
        <svg class="ucs" width="100" height="100" viewBox="0 0 100 100" fill="none" stroke="#d5d9dc">
          <path d="M4 86h10v10H4zM9 86V32M5 44l4-12 4 12M14 91h54M56 87l12 4-12 4"/>
          <text x="4" y="23" fill="#d5d9dc" stroke="none">Y</text><text x="77" y="96" fill="#d5d9dc" stroke="none">X</text>
        </svg>
      </div>
      <div class="layouts">
        <button class="nav" type="button" aria-label="展开"><svg viewBox="0 0 8 8"><path d="M0 6l4-4 4 4z" fill="#fff"/></svg></button>
        <button class="nav" type="button" aria-label="第一个"><svg viewBox="0 0 8 8"><path d="M7 0v8L3 4zM1 0h1v8H1z" fill="#9aa3b0"/></svg></button>
        <button class="nav" type="button" aria-label="上一个"><svg viewBox="0 0 8 8"><path d="M6 0v8L2 4z" fill="#9aa3b0"/></svg></button>
        <button class="nav" type="button" aria-label="下一个"><svg viewBox="0 0 8 8"><path d="M2 0v8l4-4z" fill="#9aa3b0"/></svg></button>
        <button class="nav" type="button" aria-label="最后一个"><svg viewBox="0 0 8 8"><path d="M1 0v8l4-4zM6 0h1v8H6z" fill="#9aa3b0"/></svg></button>
        <button class="on" type="button">模型</button><button class="sheet" type="button">布局1</button><button class="sheet" type="button">布局2</button><button class="plus" type="button">+</button>
      </div>
    `;
  }
}
customElements.define("zw-drawing", ZwDrawing);

// ---------- property palette ----------
const PROPS = [
  ["基本", [["颜色", '<i class="swatch"></i>随层'], ["图层", "0", "num"], ["线型", '<i class="rule"></i>随层'], ["线型比例", "1", "num"], ["线宽", '<i class="rule short"></i>随层'], ["透明度", "随层"], ["厚度", "0", "num"]]],
  ["视图", [["中心点 X", "555.8901", "num dim"], ["中心点 Y", "450.4994", "num dim"], ["中心点 Z", "0", "num dim"], ["高度", "607.7385", "num dim"], ["宽度", "1748.5101", "num dim"]]],
  ["其他", [["注释比例", "1:1", "num"], ["打开 UC...", "是"], ["在原点显...", "是"], ["每个视口...", "是"], ["UCS 名称", ""], ["视觉样式", "二维线框"]]],
];

class ZwProperties extends HTMLElement {
  connectedCallback() {
    this.attachShadow({ mode: "open" });
    const sections = PROPS.map(([title, rows]) => `
      <section>
        <h3><button type="button">${title}</button></h3>
        <table>${rows.map(([name, value, cls = ""]) => `<tr><th scope="row">${name}</th><td class="${cls}">${value}</td></tr>`).join("")}</table>
      </section>`);
    this.shadowRoot.innerHTML = `
      <style>
        :host { display: block; width: 207px; background: #434c57; color: #d3d8dc; flex: none; }
        header { display: flex; align-items: center; height: 20px; background: #515c67; padding: 0 5px 0 7px; }
        h2 { margin: 0 auto 0 0; font-size: 13px; line-height: 20px; color: #fff; }
        header button { border: 0; padding: 0; background: none; }
        header svg { width: 9px; height: 9px; display: block; }
        .pick { display: flex; align-items: center; gap: 5px; margin: 4px; }
        zw-select { flex: 1; height: 20px; }
        section { margin: 0 13px 2px 4px; }
        h3 { margin: 0; background: #3b3f45; border: 1px solid #4f5a61; box-sizing: border-box; height: 22px; }
        h3 button { position: relative; display: block; width: 100%; text-align: left; border: 0; padding: 0 2px; background: none; color: #f2f4f5; font: bold 12px/20px "Open Sans", "Noto Sans CJK SC", sans-serif; }
        h3 button::after { content: ""; position: absolute; right: 6px; top: 7px; border: 5px solid transparent; border-top-color: #fff; border-bottom: 0; }
        table { border-collapse: collapse; margin-left: 10px; width: calc(100% - 10px); table-layout: fixed; font-size: 11px; line-height: 16px; }
        tr { height: 23px; }
        tr:nth-child(3n) { height: 22px; }
        th, td { border: 1px solid #4e5963; padding: 0 2px; font-weight: 400; text-align: left; white-space: nowrap; }
        th { width: 53px; }
        .num { font-size: 12px; }
        .dim { color: #8b939c; }
        .swatch { display: inline-block; width: 9px; height: 9px; background: #fff; margin-right: 2px; }
        .rule { display: inline-block; width: 28px; height: 1px; background: #c3c9ce; margin-right: 3px; vertical-align: middle; }
        .short { width: 25px; }
      </style>
      <header><h2>特性</h2><button type="button" aria-label="关闭"><svg viewBox="0 0 9 9"><path d="M0 0l9 9M9 0L0 9" stroke="#fff"/></svg></button></header>
      <div class="pick"><zw-select plain label="对象" value="无选择"></zw-select><zw-tool icon="addsel"></zw-tool><zw-tool icon="quicksel"></zw-tool><zw-tool icon="flash"></zw-tool></div>
      ${sections.join("")}
    `;
  }
}
customElements.define("zw-properties", ZwProperties);

// ---------- command window ----------
class ZwCommand extends HTMLElement {
  connectedCallback() {
    this.attachShadow({ mode: "open" });
    // latin runs get the narrower mono face
    const lines = this.textContent.trim().split(/\s*\n\s*/)
      .map((row) => `<div>${row.replace(/[\x20-\x7e]+/g, (run) => `<span>${run}</span>`)}</div>`);
    this.shadowRoot.innerHTML = `
      <style>
        :host { display: grid; grid-template: minmax(0, 1fr) / 16px 1fr 12px; height: 143px; flex: none; background: #2d3035; color: #aeb3b8; box-sizing: border-box; border-top: 1px solid #3a424c; font: 15px/17px "Noto Sans CJK SC", sans-serif; font-weight: 300; }
        .side { background: #434a57; }
        .side button { border: 0; background: none; padding: 3px; display: block; }
        .side svg { width: 10px; height: 10px; display: block; }
        .main { display: flex; flex-direction: column; border-left: 1px solid #4f5963; min-width: 0; }
        .log { flex: 1; min-height: 0; white-space: pre; }
        .log div { height: 17px; }
        .log span { font: 13px/15px "Liberation Mono", monospace; }
        input { border: 0; border-top: 1px solid #41464c; background: none; color: inherit; font: inherit; height: 20px; padding: 0; box-sizing: border-box; flex: none; }
        .scroll { display: flex; flex-direction: column; justify-content: space-between; align-items: center; background: #3a4048; margin-bottom: 20px; padding: 4px 0; }
        .scroll b { width: 8px; height: 7px; margin: auto 0 3px; background: #555c66; }
        .scroll svg { width: 8px; height: 5px; }
      </style>
      <div class="side"><button type="button" aria-label="关闭"><svg viewBox="0 0 10 10"><path d="M0 0l10 10M10 0L0 10" stroke="#6f767e"/></svg></button></div>
      <div class="main"><div class="log">${lines.join("")}</div><input aria-label="命令行" value="${this.getAttribute("prompt")}"></div>
      <div class="scroll"><svg viewBox="0 0 8 5"><path d="M0 5l4-4 4 4" fill="none" stroke="#8b939c"/></svg><b></b><svg viewBox="0 0 8 5"><path d="M0 0l4 4 4-4" fill="none" stroke="#8b939c"/></svg></div>
    `;
  }
}
customElements.define("zw-command", ZwCommand);

// ---------- page ----------
class ZwApp extends HTMLElement {
  connectedCallback() {
    this.attachShadow({ mode: "open" });
    this.render();
  }

  render() {
    this.shadowRoot.innerHTML = `
      <style>
        :host { display: flex; flex-direction: column; height: 100vh; position: relative; background: #333a44; overflow: hidden; }
        .row { display: flex; align-items: center; height: 22px; box-sizing: border-box; background: #434c56; border-bottom: 1px solid #7f8a96; }
        .bars { height: 112px; flex: none; display: flex; flex-direction: column; align-items: flex-start; box-sizing: border-box; border-bottom: 1px solid #2b3139; }
        .styles { width: 1026px; }
        .layers { width: 930px; }
        .plain { width: 700px; }
        .fill { flex: 1; }
        .sep { width: 2px; height: 17px; margin: 0 3px; background: #7f8a96; }
        .layer { gap: 1px; margin: 0 0 0 1px; width: 285px; flex: none; color: #c3c9ce; }
        .sw { width: 12px; height: 12px; background: #fff; margin: 0 2px 0 4px; }
        .work { flex: 1; display: flex; min-height: 0; }
        .left { flex: 1; display: flex; flex-direction: column; min-width: 0; }
        .space { flex: 1; display: flex; min-height: 0; overflow: hidden; container-type: size; }
        .dock { display: flex; align-items: flex-start; }
        zw-drawing { flex: 1; margin: 0 1px 1px 1px; }
        .edge { width: 4px; background: #2c3139; }
        zw-command { margin-right: 4px; }
        footer { height: 17px; flex: none; color: #8d959d; font: 11px/20px "Noto Sans CJK SC", sans-serif; white-space: nowrap; }
        footer span { font: 10px "Liberation Mono", monospace; }
        .popup { position: absolute; top: 43px; z-index: 2; }
        .ext { left: 465px; width: 141px; height: 218px; }
        .sub { left: 605px; width: 186px; height: 412px; }
        .marks { position: absolute; left: 0; top: 0; z-index: 3; pointer-events: none; }
      </style>
      <zw-titlebar>ZWCAD 2024 试用版 (功能受限) - [Drawing1.dwg]</zw-titlebar>
      <zw-menubar open="扩展工具(X)" items="文件(F) 编辑(E) 视图(V) 插入(I) 格式(O) 工具(T) 绘图(D) 标注(N) 修改(M) 扩展工具(X) 窗口(W) 帮助(H) ArcGIS APP+ 塑胶模"></zw-menubar>
      <div class="bars">
        <div class="row styles">
          <zw-toolbar style="width:471px" tools="new open save saveas saveall | print preview publish | cut copy paste pastespec match | undo-box | pan zoomrt zoomwin zoomprev | calc sheet"></zw-toolbar>
          <span class="fill"></span>
          <zw-tool icon="tablestyle"></zw-tool><zw-select small style="width:94px;margin-left:3px" label="表格样式" value="Standard"></zw-select>
          <i class="sep"></i>
          <zw-tool icon="leader"></zw-tool><zw-select small style="width:95px;margin-left:3px" label="引线样式" value="Standard"></zw-select>
        </div>
        <div class="row layers">
          <zw-toolbar style="width:23px" tools="layerprops"></zw-toolbar>
          <zw-select class="layer" label="图层" value="0"><zw-tool icon="bulb"></zw-tool><zw-tool icon="sun"></zw-tool><zw-tool icon="freeze"></zw-tool><zw-tool icon="unlock"></zw-tool><i class="sw"></i></zw-select>
          <zw-toolbar style="width:63px;border:0" tools="laycur layprev laystate"></zw-toolbar>
          <i class="sep"></i>
          <zw-select style="flex:1" label="颜色" value="随层"><i class="sw"></i></zw-select>
          <i class="sep"></i>
          <zw-select style="width:111px" label="打印样式" value="随色"></zw-select>
        </div>
        <div class="row plain"><zw-toolbar style="width:481px" tools="stack | k:0 k:中 k:水 k:仁 k:尺 k:顶 k:表 k:填 k:镶 k:斜 k:模 k:产 k:流 k:螺 k:滑 k:撑 k:弹 k:标 k:临 k:字 | wrench bolt"></zw-toolbar></div>
        <div class="row plain"><zw-toolbar style="width:486px" tools="dotbox slot | target sketch redbox dash2 printer wave zig breakl | bars bars2 fan slant diag1 diag2 loopR loopP frame rows | harrow varrow rows"></zw-toolbar></div>
        <div class="row plain"><zw-toolbar style="width:482px" tools="profile b:库 spring1 | screw1 ring pin | torus tshape | cyl cyl2 mush bolt2 hammer coil four | book pipe | wedge nozzle | tri bracket cube"></zw-toolbar></div>
      </div>
      <div class="work">
        <div class="left">
          <div class="space">
            <div class="dock">
              <zw-toolbar vertical first tools="line xline pline polygon rect arc circle cloud spline ellipse earc insert block points hatch region tbl image"></zw-toolbar>
              <zw-toolbar vertical tools="b:建 layersO abrush bline b:令 folder b:键 flag flagc broom diskG diskP mirr cpy dots1 dots1 down0 sqrot scaleT rotT moveT arcs"></zw-toolbar>
              <zw-toolbar vertical tools="pgpen pgsave m:换 curve m:数 num2 kuai shapes wand selx lu has nohas ming curls link cbrush carrow xy"></zw-toolbar>
              <zw-toolbar vertical tools="one pgrid eight list triN credl cube ji redarc barcode b:字 b:词 f1 erab aud ab2 abb zic"></zw-toolbar>
              <zw-toolbar vertical tools="c1 c2 c3 c4 c5 c6 c7 c8"></zw-toolbar>
              <zw-toolbar vertical tools="bi l1 l2 l3 l4 l3 l5 l6 l7 l8 l9"></zw-toolbar>
            </div>
            <zw-drawing></zw-drawing>
            <div class="dock">
              <zw-toolbar vertical tools="erase copyobj mirror offset array move rotate scale stretch trim extend break1 break2 join chamfer fillet blend sphere explode | front group"></zw-toolbar>
              <zw-toolbar vertical tools="ucs ucsc ucsk dck rck kalk kalk b:长 b:机 b:塑 b:钢 b:注 b:NG rough pct"></zw-toolbar>
              <zw-toolbar vertical tools="dbroom deras ue d000 rot0 d0 d31 e1 e2 e3 e4 e5 e6 lv1 lv2 lv3 grass"></zw-toolbar>
              <zw-toolbar vertical tools="f1a f2 f3 f4 f5 f6 f7 f8 f9 f10 f11 f12 f13 z镶 z筒 z丝 z盲 z通 z周 z直 z无"></zw-toolbar>
            </div>
            <i class="edge"></i>
          </div>
          <zw-command prompt="选择要改变到当前图层的对象:">
            找到 1 个，总计 2 个
            选择对象:
            命令:
            命令: _laycur
            选择要改变到当前图层的对象:
            指定对角点:
            找到 0 个
          </zw-command>
        </div>
        <zw-properties></zw-properties>
      </div>
      <footer>将选定对象的图层更改为当前图层：<span>LAYCUR</span></footer>

      <zw-menu class="popup ext" cascade active="图层工具">
        :图层工具:L
        :图块工具:B
        :文本工具:E
        :标注工具:N
        :选择工具:S
        :编辑工具:M
        :绘图工具:D
        :文件工具:F
        :定制工具:T
        :其他:O
      </zw-menu>
      <zw-menu class="popup sub" active="更改为当前图层">
        m1:图层状态管理器:L:...
        m2:将对象的图层置为当前:R
        m3:上一个图层:P
        m4:图层漫步:W:...
        m5:图层浏览器:B:...
        -
        m6:图层匹配:M
        m7:更改为当前图层:C
        m8:改层复制:P
        -
        m9:图层隔离:I
        m10:取消图层隔离:N
        -
        m11:关闭对象图层:O
        m12:打开所有图层:N
        -
        m13:解冻所有图层:F
        m14:冻结对象图层:T
        -
        m15:图层锁定:K
        m16:图层解锁:U
        -
        m17:图层合并:E
        m18:图层删除:D
      </zw-menu>
      <svg class="marks" width="900" height="380" viewBox="0 0 900 380">
        <g fill="#ee1620" stroke="#ee1620" stroke-width="2">
          <path d="M359 219L468 71M869 360L764 198"/>
          <path stroke="none" d="M473 64l-2 12-8-6zM758 190l12 6-9 7z"/>
        </g>
      </svg>
    `;
  }
}
customElements.define("zw-app", ZwApp);
</script>
</body>
</html>
